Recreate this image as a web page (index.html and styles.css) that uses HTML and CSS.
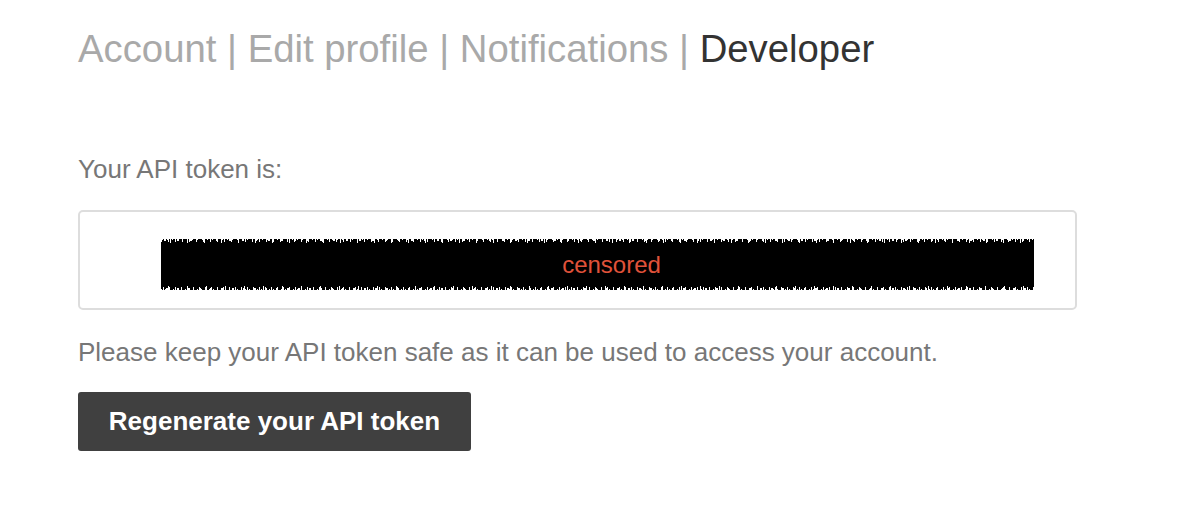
FILE: index.html
```html
<!DOCTYPE html>
<html>
<head>
<meta charset="utf-8">
<link rel="stylesheet" href="styles.css">
</head>
<body>
<div class="page">
  <h1 class="tabs">
    <a class="tab">Account</a><span class="sep"> | </span><a class="tab">Edit profile</a><span class="sep"> | </span><a class="tab">Notifications</a><span class="sep"> | </span><span class="tab active">Developer</span>
  </h1>
  <p class="label">Your API token is:</p>
  <div class="token-box">
    <div class="redact"><span class="token">censored</span></div>
  </div>
  <p class="note">Please keep your API token safe as it can be used to access your account.</p>
  <button class="btn">Regenerate your API token</button>
</div>
</body>
</html>
```
FILE: styles.css
```css
html, body { margin: 0; padding: 0; background: #fff; }
body { font-family: "Liberation Sans", Arial, sans-serif; }
.page { padding: 26px 78px 0 78px; width: 999px; }
.tabs { margin: 0; font-size: 38.3px; font-weight: normal; line-height: 46px; color: #a9a9a9; white-space: nowrap; }
.tab { color: #a9a9a9; text-decoration: none; }
.tab.active { color: #333; }
.sep { color: #a9a9a9; }
.label { margin: 82px 0 0 0; font-size: 26px; line-height: 30px; color: #777; }
.token-box { margin-top: 26px; height: 96px; border: 2px solid #ddd; border-radius: 5px; display: flex; align-items: flex-start; padding-left: 81px; padding-top: 0; box-sizing: content-box; }
.redact { position: relative; width: 873px; height: 51px; margin-top: 27px; background: #000; display: flex; align-items: center; justify-content: center; }
.redact::before, .redact::after { content: ""; position: absolute; left: 0; right: 0; height: 4px; }
.redact::before {
  top: 0;
  background:
    repeating-linear-gradient(90deg, #fff 0 1px, transparent 1px 7px) 0 0 / 100% 3px no-repeat,
    repeating-linear-gradient(90deg, #fff 0 2px, transparent 2px 13px) 3px 0 / 100% 2px no-repeat,
    repeating-linear-gradient(90deg, #fff 0 1px, transparent 1px 5px) 1px 0 / 100% 1px no-repeat,
    repeating-linear-gradient(90deg, #fff 0 1px, transparent 1px 17px) 9px 0 / 100% 4px no-repeat;
}
.redact::after {
  bottom: 0;
  background:
    repeating-linear-gradient(90deg, #fff 0 1px, transparent 1px 6px) 2px 100% / 100% 3px no-repeat,
    repeating-linear-gradient(90deg, #fff 0 2px, transparent 2px 11px) 5px 100% / 100% 2px no-repeat,
    repeating-linear-gradient(90deg, #fff 0 1px, transparent 1px 4px) 0 100% / 100% 1px no-repeat,
    repeating-linear-gradient(90deg, #fff 0 1px, transparent 1px 19px) 7px 100% / 100% 4px no-repeat;
}
.token { color: #e0523a; font-size: 24px; line-height: 51px; padding-left: 28px; }
.note { margin: 27px 0 0 0; font-size: 26px; line-height: 30px; color: #777; }
.btn { display: block; margin-top: 25px; width: 393px; height: 59px; background: #404040; color: #fff; border: none; border-radius: 3px; font-family: "Liberation Sans", Arial, sans-serif; font-weight: bold; font-size: 26px; line-height: 59px; padding: 0; }
```
